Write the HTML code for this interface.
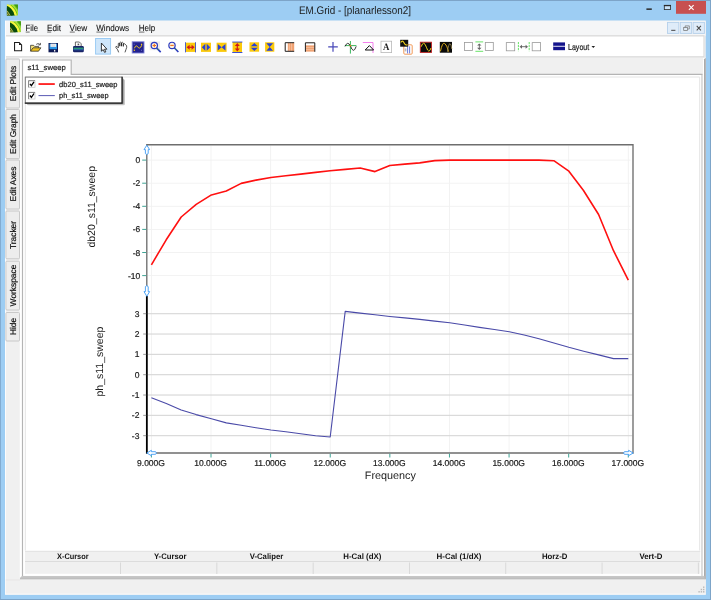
<!DOCTYPE html>
<html><head><meta charset="utf-8"><title>EM.Grid - [planarlesson2]</title>
<style>
html,body{margin:0;padding:0;width:711px;height:600px;overflow:hidden;background:#9dcdf3}
svg{display:block;position:absolute;left:0;top:0;will-change:transform}
text{font-family:"Liberation Sans",sans-serif;fill:#1a1a1a;text-rendering:geometricPrecision;stroke:#1a1a1a;stroke-width:0.2px}
.ns{stroke:none}
.m{font-size:9px;fill:#111;stroke-width:0.1px}
.t8{font-size:8.5px;fill:#1c1c1c}
.side{font-size:8.4px;fill:#0c0c0c;stroke:#0c0c0c;stroke-width:0.18px}
.hd{font-size:8px;font-weight:bold;fill:#111;stroke:none}
</style></head>
<body>
<svg width="711" height="600" viewBox="0 0 711 600">
<g id="frame">
<rect x="0" y="0" width="711" height="600" fill="#9dcdf3"/>
<path d="M0 0 H711 V600 H0 Z M0.8 0.9 V599 H710 V0.9 Z" fill="#7da4c8" fill-rule="evenodd"/>
</g>
<g id="title">
<g transform="translate(6.9 4.6)">
<clipPath id="lc1"><rect width="11" height="11"/></clipPath>
<g clip-path="url(#lc1)">
<rect width="11" height="11" fill="#6fc01c"/>
<circle cx="-4.95" cy="13.20" r="19.58" fill="none" stroke="#3f9a14" stroke-width="3.30"/>
<circle cx="-4.95" cy="13.20" r="16.50" fill="none" stroke="#b6ea3c" stroke-width="1.10"/>
<circle cx="-4.95" cy="13.20" r="13.97" fill="none" stroke="#f7f43e" stroke-width="2.20"/>
<circle cx="-4.95" cy="13.20" r="11.00" fill="#0a4a0c" stroke="#0a4a0c" stroke-width="3.74"/>
<circle cx="-4.95" cy="13.20" r="8.80" fill="#4c6a14"/>
<path d="M0 6.05 L3.30 11 M0 8.80 L1.32 11" stroke="#c8c86a" stroke-width="0.77"/>
</g></g>
<text class="ns" x="355" y="14.3" text-anchor="middle" font-size="11.1" textLength="112" lengthAdjust="spacingAndGlyphs" fill="#222">EM.Grid - [planarlesson2]</text>
<rect x="676" y="1" width="30" height="12.8" fill="#c75050"/>
<path d="M688.9 5.2 L693.6 9.9 M693.6 5.2 L688.9 9.9" stroke="#fff" stroke-width="1.15" fill="none"/>
<rect x="664.3" y="5.4" width="6.3" height="4.2" fill="#c9e2f7" stroke="#2a2a2a" stroke-width="0.8"/>
<rect x="663.9" y="4.9" width="7.1" height="1.3" fill="#2a2a2a"/>
<rect x="646.4" y="8.4" width="5.4" height="1.5" fill="#2a2a2a"/>
</g>
<g id="menubar">
<rect x="5" y="20.7" width="700.7" height="573.8" fill="#f0f0f0"/>
<rect x="5.5" y="20.7" width="700.2" height="15" fill="#f5f6f7"/>
<g transform="translate(10 21.3)">
<clipPath id="lc2"><rect width="10.9" height="10.9"/></clipPath>
<g clip-path="url(#lc2)">
<rect width="10.9" height="10.9" fill="#6fc01c"/>
<circle cx="-4.91" cy="13.08" r="19.40" fill="none" stroke="#3f9a14" stroke-width="3.27"/>
<circle cx="-4.91" cy="13.08" r="16.35" fill="none" stroke="#b6ea3c" stroke-width="1.09"/>
<circle cx="-4.91" cy="13.08" r="13.84" fill="none" stroke="#f7f43e" stroke-width="2.18"/>
<circle cx="-4.91" cy="13.08" r="10.90" fill="#0a4a0c" stroke="#0a4a0c" stroke-width="3.71"/>
<circle cx="-4.91" cy="13.08" r="8.72" fill="#4c6a14"/>
<path d="M0 6.00 L3.27 10.9 M0 8.72 L1.31 10.9" stroke="#c8c86a" stroke-width="0.76"/>
</g></g>
<text class="m" x="25.5" y="30.7" textLength="12.5" lengthAdjust="spacingAndGlyphs">File</text>
<rect x="25.7" y="31.7" width="4" height="0.7" fill="#333"/>
<text class="m" x="47" y="30.7" textLength="14" lengthAdjust="spacingAndGlyphs">Edit</text>
<rect x="47.2" y="31.7" width="4" height="0.7" fill="#333"/>
<text class="m" x="69.6" y="30.7" textLength="17.7" lengthAdjust="spacingAndGlyphs">View</text>
<rect x="69.8" y="31.7" width="5" height="0.7" fill="#333"/>
<text class="m" x="96.2" y="30.7" textLength="33" lengthAdjust="spacingAndGlyphs">Windows</text>
<rect x="96.4" y="31.7" width="7.5" height="0.7" fill="#333"/>
<text class="m" x="138.7" y="30.7" textLength="16.5" lengthAdjust="spacingAndGlyphs">Help</text>
<rect x="138.89999999999998" y="31.7" width="5.5" height="0.7" fill="#333"/>
<rect x="667.5" y="22.4" width="11.3" height="11" fill="#dfecf9" stroke="#b6d0ea" stroke-width="0.9"/>
<rect x="680.3" y="22.4" width="11.3" height="11" fill="#dfecf9" stroke="#b6d0ea" stroke-width="0.9"/>
<rect x="693.1" y="22.4" width="11.3" height="11" fill="#dfecf9" stroke="#b6d0ea" stroke-width="0.9"/>
<rect x="671.2" y="29.8" width="4.2" height="1.1" fill="#555"/>
<rect x="683.7" y="27.6" width="3.8" height="3" fill="none" stroke="#777" stroke-width="0.75"/><path d="M685.2 27.4 V25.9 H689.3 V29 H687.8" fill="none" stroke="#777" stroke-width="0.75"/>
<path d="M696.7 25.9 L700.9 30.3 M700.9 25.9 L696.7 30.3" stroke="#4a4a4a" stroke-width="1.05" fill="none"/>
</g>
<g id="toolbar">
<rect x="5.5" y="35.2" width="699" height="22.5" fill="#dadada"/>
<rect x="6" y="36.5" width="697.4" height="19.7" fill="#ffffff"/>
</g>
<g id="client">
<rect x="5.5" y="57.6" width="700.2" height="537" fill="#f0f0f0"/>
<rect x="5" y="20.7" width="0.8" height="573.8" fill="#ffffff"/>
<rect x="703" y="58" width="1.2" height="518" fill="#ffffff"/>
<path d="M704.1 59.4 L705.7 57.8 V579.5 H704.1 Z" fill="#a2a2a2"/>
<rect x="20" y="575.9" width="684.6" height="3.6" fill="#c6c6c6"/>
<rect x="20" y="577.6" width="684.6" height="1.9" fill="#bebebe"/>
<rect x="5.8" y="579.5" width="699.9" height="14.3" fill="#f0f0f0"/>
<rect x="5.8" y="579.6" width="14.2" height="0.7" fill="#e4e2e2"/>
<rect x="5.5" y="593.6" width="700.2" height="0.9" fill="#fbfbfb"/>
<path d="M19.8 58 H21.9 V576 L19.8 578 Z" fill="#ffffff"/>
<rect x="22.5" y="74" width="679.5" height="501.9" fill="#ffffff"/>
<rect x="22.5" y="59.5" width="48.8" height="16" fill="#ffffff"/>
<path d="M701.9 74 V575.9" fill="none" stroke="#cdcdcd" stroke-width="1.2"/>
<path d="M22.5 575.9 V60 H71.2 V74.4 H702.4" fill="none" stroke="#b4b4b4" stroke-width="1.15"/>
<text x="27.5" y="69.6" font-size="7.6" textLength="38.3" lengthAdjust="spacingAndGlyphs" fill="#111">s11_sweep</text>
<path d="M25.3 550.5 V77 H699.7 V550.5" fill="none" stroke="#e4e4e4" stroke-width="1"/>
</g>
<g id="sidetabs">
<rect x="5.9" y="59" width="13.6" height="49.0" rx="1" fill="#ededed" stroke="#c4c4c4" stroke-width="0.9"/>
<text class="side" transform="translate(16.3 83.5) rotate(-90)" text-anchor="middle">Edit Plots</text>
<rect x="5.9" y="109.5" width="13.6" height="49.1" rx="1" fill="#ededed" stroke="#c4c4c4" stroke-width="0.9"/>
<text class="side" transform="translate(16.3 134) rotate(-90)" text-anchor="middle">Edit Graph</text>
<rect x="5.9" y="160" width="13.6" height="49.0" rx="1" fill="#ededed" stroke="#c4c4c4" stroke-width="0.9"/>
<text class="side" transform="translate(16.3 184) rotate(-90)" text-anchor="middle">Edit Axes</text>
<rect x="5.9" y="211" width="13.6" height="47.8" rx="1" fill="#ededed" stroke="#c4c4c4" stroke-width="0.9"/>
<text class="side" transform="translate(16.3 235) rotate(-90)" text-anchor="middle">Tracker</text>
<rect x="5.9" y="261.2" width="13.6" height="48.8" rx="1" fill="#ededed" stroke="#c4c4c4" stroke-width="0.9"/>
<text class="side" transform="translate(16.3 285.5) rotate(-90)" text-anchor="middle">Workspace</text>
<rect x="5.9" y="312.5" width="13.6" height="28.5" rx="1" fill="#ededed" stroke="#c4c4c4" stroke-width="0.9"/>
<text class="side" transform="translate(16.3 326.5) rotate(-90)" text-anchor="middle">Hide</text>
</g>
<g id="table">
<rect x="25" y="551" width="675.2" height="22.8" fill="#f0f0f0"/>
<rect x="25" y="550.8" width="675.2" height="0.9" fill="#dedede"/>
<rect x="25" y="561" width="675.2" height="0.9" fill="#dadada"/>
<rect x="120.1" y="562.5" width="0.9" height="11.5" fill="#d6d6d6"/>
<rect x="216.4" y="562.5" width="0.9" height="11.5" fill="#d6d6d6"/>
<rect x="312.7" y="562.5" width="0.9" height="11.5" fill="#d6d6d6"/>
<rect x="409.0" y="562.5" width="0.9" height="11.5" fill="#d6d6d6"/>
<rect x="505.3" y="562.5" width="0.9" height="11.5" fill="#d6d6d6"/>
<rect x="601.6" y="562.5" width="0.9" height="11.5" fill="#d6d6d6"/>
<rect x="697.9" y="562.5" width="0.9" height="11.5" fill="#d6d6d6"/>
<text class="hd" x="57.0" y="559.4" textLength="31.6" lengthAdjust="spacingAndGlyphs">X-Cursor</text>
<text class="hd" x="153.9" y="559.4" textLength="32.5" lengthAdjust="spacingAndGlyphs">Y-Cursor</text>
<text class="hd" x="249.7" y="559.4" textLength="33.6" lengthAdjust="spacingAndGlyphs">V-Caliper</text>
<text class="hd" x="343.3" y="559.4" textLength="38" lengthAdjust="spacingAndGlyphs">H-Cal (dX)</text>
<text class="hd" x="436.6" y="559.4" textLength="44.9" lengthAdjust="spacingAndGlyphs">H-Cal (1/dX)</text>
<text class="hd" x="541.9" y="559.4" textLength="25.5" lengthAdjust="spacingAndGlyphs">Horz-D</text>
<text class="hd" x="639.4" y="559.4" textLength="23" lengthAdjust="spacingAndGlyphs">Vert-D</text>
<g fill="#b8b8b8"><rect x="703" y="586.5" width="1.4" height="1.4"/><rect x="703" y="588.8" width="1.4" height="1.4"/><rect x="703" y="591.1" width="1.4" height="1.4"/><rect x="700.7" y="588.8" width="1.4" height="1.4"/><rect x="700.7" y="591.1" width="1.4" height="1.4"/><rect x="698.4" y="591.1" width="1.4" height="1.4"/></g>
</g>
<g id="plot">
<rect x="150.95" y="145.5" width="0.9" height="307" fill="#f1f1f1"/>
<rect x="210.56" y="145.5" width="0.9" height="307" fill="#f1f1f1"/>
<rect x="270.17" y="145.5" width="0.9" height="307" fill="#f1f1f1"/>
<rect x="329.78" y="145.5" width="0.9" height="307" fill="#f1f1f1"/>
<rect x="389.39" y="145.5" width="0.9" height="307" fill="#f1f1f1"/>
<rect x="449.00" y="145.5" width="0.9" height="307" fill="#f1f1f1"/>
<rect x="508.61" y="145.5" width="0.9" height="307" fill="#f1f1f1"/>
<rect x="568.22" y="145.5" width="0.9" height="307" fill="#f1f1f1"/>
<rect x="627.83" y="145.5" width="0.9" height="307" fill="#f1f1f1"/>
<rect x="147.5" y="159.65" width="483" height="0.9" fill="#f1f1f1"/>
<rect x="147.5" y="182.75" width="483" height="0.9" fill="#f1f1f1"/>
<rect x="147.5" y="205.85" width="483" height="0.9" fill="#f1f1f1"/>
<rect x="147.5" y="228.95" width="483" height="0.9" fill="#f1f1f1"/>
<rect x="147.5" y="252.05" width="483" height="0.9" fill="#f1f1f1"/>
<rect x="147.5" y="275.15" width="483" height="0.9" fill="#f1f1f1"/>
<rect x="147.8" y="313.15" width="484.6" height="1.1" fill="#d6d6d6"/>
<rect x="147.8" y="333.48" width="484.6" height="1.1" fill="#d6d6d6"/>
<rect x="147.8" y="353.81" width="484.6" height="1.1" fill="#d6d6d6"/>
<rect x="147.8" y="374.14" width="484.6" height="1.1" fill="#d6d6d6"/>
<rect x="147.8" y="394.47" width="484.6" height="1.1" fill="#d6d6d6"/>
<rect x="147.8" y="414.80" width="484.6" height="1.1" fill="#d6d6d6"/>
<rect x="147.8" y="435.13" width="484.6" height="1.1" fill="#d6d6d6"/>
<path d="M146.8 291 V144.7 H633 V453 H152" fill="none" stroke="#6e6e6e" stroke-width="1.35"/>
<rect x="145.95" y="296" width="1.8" height="157.7" fill="#000"/>
<rect x="142.2" y="159.60" width="4" height="1" fill="#3fa596"/>
<rect x="142.2" y="182.70" width="4" height="1" fill="#3fa596"/>
<rect x="142.2" y="205.80" width="4" height="1" fill="#3fa596"/>
<rect x="142.2" y="228.90" width="4" height="1" fill="#3fa596"/>
<rect x="142.2" y="252.00" width="4" height="1" fill="#3fa596"/>
<rect x="142.2" y="275.10" width="4" height="1" fill="#3fa596"/>
<rect x="143.2" y="313.20" width="3" height="1" fill="#9a9a9a"/>
<rect x="143.2" y="333.53" width="3" height="1" fill="#9a9a9a"/>
<rect x="143.2" y="353.86" width="3" height="1" fill="#9a9a9a"/>
<rect x="143.2" y="374.19" width="3" height="1" fill="#9a9a9a"/>
<rect x="143.2" y="394.52" width="3" height="1" fill="#9a9a9a"/>
<rect x="143.2" y="414.85" width="3" height="1" fill="#9a9a9a"/>
<rect x="143.2" y="435.18" width="3" height="1" fill="#9a9a9a"/>
<rect x="150.90" y="453.7" width="1" height="3.8" fill="#3fa596"/>
<rect x="210.51" y="453.7" width="1" height="3.8" fill="#3fa596"/>
<rect x="270.12" y="453.7" width="1" height="3.8" fill="#3fa596"/>
<rect x="329.73" y="453.7" width="1" height="3.8" fill="#3fa596"/>
<rect x="389.34" y="453.7" width="1" height="3.8" fill="#3fa596"/>
<rect x="448.95" y="453.7" width="1" height="3.8" fill="#3fa596"/>
<rect x="508.56" y="453.7" width="1" height="3.8" fill="#3fa596"/>
<rect x="568.17" y="453.7" width="1" height="3.8" fill="#3fa596"/>
<rect x="627.78" y="453.7" width="1" height="3.8" fill="#3fa596"/>
<text class="t8" x="140.2" y="163.1" text-anchor="end">0</text>
<text class="t8" x="140.2" y="186.2" text-anchor="end">-2</text>
<text class="t8" x="140.2" y="209.3" text-anchor="end">-4</text>
<text class="t8" x="140.2" y="232.4" text-anchor="end">-6</text>
<text class="t8" x="140.2" y="255.5" text-anchor="end">-8</text>
<text class="t8" x="140.2" y="278.6" text-anchor="end">-10</text>
<text class="t8" x="139.4" y="316.7" text-anchor="end">3</text>
<text class="t8" x="139.4" y="337.0" text-anchor="end">2</text>
<text class="t8" x="139.4" y="357.4" text-anchor="end">1</text>
<text class="t8" x="139.4" y="377.7" text-anchor="end">0</text>
<text class="t8" x="139.4" y="398.0" text-anchor="end">-1</text>
<text class="t8" x="139.4" y="418.3" text-anchor="end">-2</text>
<text class="t8" x="139.4" y="438.7" text-anchor="end">-3</text>
<text class="t8" x="151.0" y="466.4" text-anchor="middle">9.000G</text>
<text class="t8" x="210.6" y="466.4" text-anchor="middle">10.000G</text>
<text class="t8" x="270.2" y="466.4" text-anchor="middle">11.000G</text>
<text class="t8" x="329.8" y="466.4" text-anchor="middle">12.000G</text>
<text class="t8" x="389.4" y="466.4" text-anchor="middle">13.000G</text>
<text class="t8" x="449.1" y="466.4" text-anchor="middle">14.000G</text>
<text class="t8" x="508.7" y="466.4" text-anchor="middle">15.000G</text>
<text class="t8" x="568.3" y="466.4" text-anchor="middle">16.000G</text>
<text class="t8" x="627.9" y="466.4" text-anchor="middle">17.000G</text>
<text class="ns" x="390.3" y="479.2" font-size="10.8" text-anchor="middle" fill="#222">Frequency</text>
<text class="ns" transform="translate(95.2 206.8) rotate(-90)" font-size="10.5" text-anchor="middle" fill="#222">db20_s11_sweep</text>
<text class="ns" transform="translate(103.3 361.6) rotate(-90)" font-size="10.5" text-anchor="middle" fill="#222">ph_s11_sweep</text>
<polyline points="151.4,264.8 166.2,239.8 181.2,217.0 196.2,204.4 211.4,194.9 226.3,191.0 241.2,183.4 256.0,180.1 270.9,177.5 285.8,175.8 300.7,174.1 315.6,172.4 330.1,170.8 345.3,169.4 360.2,168.0 375.0,171.6 389.8,165.5 404.8,164.1 419.7,162.9 434.8,160.6 449.7,160.1 538.9,160.1 553.8,160.7 568.5,170.8 583.5,190.5 598.6,214.5 613.5,250.7 628.3,280.1" fill="none" stroke="#ff1010" stroke-width="1.6" stroke-linejoin="round"/>
<polyline points="151.4,397.8 166.3,403.4 181.2,409.9 196.1,414.6 211.4,418.7 226.3,422.9 241.2,425.3 256.0,427.8 270.9,430.0 285.8,431.8 300.7,433.8 315.6,435.8 330.2,437.0 345.2,311.4 360.2,313.1 375.0,314.8 389.8,316.5 404.8,317.9 419.8,319.4 434.8,321.1 449.7,322.8 464.6,325.0 479.5,327.4 494.4,329.5 509.3,331.7 524.2,335.0 539.0,338.8 553.9,343.0 568.8,347.3 583.7,351.2 598.6,354.9 613.5,358.6 628.3,358.6" fill="none" stroke="#4a4aa8" stroke-width="1.1" stroke-linejoin="round"/>
<path d="M146.8 145.2 L149.6 149.6 H148.2 V153.6 Q146.8 155.4 145.4 153.6 V149.6 H144 Z" stroke="#3d9bf5" stroke-width="0.9" fill="#ffffff" stroke-linejoin="round"/>
<path d="M146.8 296.3 L149.6 291.6 H148.2 V286.6 Q146.8 284.8 145.4 286.6 V291.6 H144 Z" stroke="#3d9bf5" stroke-width="0.9" fill="#ffffff" stroke-linejoin="round"/>
<path d="M146.8 453 L151.4 450.3 V451.7 H155.6 Q157.3 453 155.6 454.3 H151.4 V455.7 Z" stroke="#3d9bf5" stroke-width="0.9" fill="#ffffff" stroke-linejoin="round"/>
<path d="M633.2 453 L628.6 450.3 V451.7 H624.4 Q622.7 453 624.4 454.3 H628.6 V455.7 Z" stroke="#3d9bf5" stroke-width="0.9" fill="#ffffff" stroke-linejoin="round"/>
</g>
<g id="legend">
<rect x="27" y="79.3" width="98" height="26" fill="#9a9a9a" opacity="0.55" rx="1.5"/>
<rect x="26" y="78.3" width="98" height="26" fill="#777" opacity="0.45" rx="1.5"/>
<rect x="25.3" y="77.1" width="96.8" height="26" fill="#ffffff" stroke="#7a7a7a" stroke-width="1"/><path d="M24.8 103.1 H122.1 V76.8" fill="none" stroke="#1e1e1e" stroke-width="1.2"/>
<rect x="28.6" y="80.7" width="6.4" height="6.6" fill="#fff" stroke="#c8c8c8" stroke-width="0.8"/><path d="M28.6 87.3 V80.7 H35" fill="none" stroke="#7c7c7c" stroke-width="0.9"/>
<path d="M29.9 83.8 L31.4 85.7 L34 81.8" fill="none" stroke="#000" stroke-width="1.3"/>
<rect x="28.6" y="92.4" width="6.4" height="6.6" fill="#fff" stroke="#c8c8c8" stroke-width="0.8"/><path d="M28.6 99.0 V92.4 H35" fill="none" stroke="#7c7c7c" stroke-width="0.9"/>
<path d="M29.9 95.5 L31.4 97.4 L34 93.5" fill="none" stroke="#000" stroke-width="1.3"/>
<rect x="38.5" y="83.2" width="16.3" height="1.7" fill="#ff1010"/>
<rect x="38.5" y="95.1" width="16.3" height="1" fill="#5a5ab4"/>
<text x="59.1" y="86.7" font-size="7.5" textLength="58.4" lengthAdjust="spacingAndGlyphs">db20_s11_sweep</text>
<text x="59.1" y="97.9" font-size="7.5" textLength="49.5" lengthAdjust="spacingAndGlyphs">ph_s11_sweep</text>
</g>
<g id="icons">
<path d="M14.55 42.5 H19.2 L21.6 44.9 V50.7 H14.55 Z" fill="#fff" stroke="#1c1c1c" stroke-width="1.05" stroke-linejoin="miter"/><path d="M19 42.5 L21.6 45.1 H19 Z" fill="#1c1c1c"/>
<path d="M30.6 51.1 V45.3 H33.6 L34.6 46.4 H38.5 V48" fill="#f7e47e" stroke="#2a2a2a" stroke-width="0.75" stroke-linejoin="round"/><path d="M30.6 51.2 L33 47.8 H40.9 L38.5 51.2 Z" fill="#f1c21e" stroke="#2a2a2a" stroke-width="0.75" stroke-linejoin="round"/><path d="M36.2 44.4 Q38 42.8 39.8 44.3 M40.4 42.9 V44.9 H38.4" fill="none" stroke="#333" stroke-width="0.8"/>
<rect x="48.5" y="43" width="9.5" height="9.3" fill="#101a54"/><rect x="49.5" y="43.8" width="7.5" height="5.4" fill="#2a96e6"/><rect x="50.5" y="43.7" width="5.6" height="3.2" fill="#f6f8fb"/><rect x="51.2" y="44.7" width="4.2" height="0.5" fill="#b0b8c4"/><rect x="51.2" y="45.8" width="4.2" height="0.5" fill="#b0b8c4"/><rect x="54" y="49.9" width="1.3" height="1.7" fill="#f0f0f0"/>
<path d="M75.4 46.4 V42 H79.4 L81.2 43.8 V46.4 Z" fill="#fff" stroke="#444" stroke-width="0.8"/><rect x="73" y="46" width="10.8" height="6.2" rx="1.2" fill="#1a2468"/><rect x="73.5" y="47.6" width="9.8" height="1.8" fill="#2a9a78"/><rect x="73.5" y="49.4" width="9.8" height="0.8" fill="#2d6fc0"/><rect x="77.6" y="43.6" width="1.6" height="1.6" fill="#555"/>
<rect x="95.6" y="38.5" width="15" height="15.6" fill="#cfe6fa" stroke="#93c7f3" stroke-width="0.9"/>
<path d="M101.4 43 V51.2 L103.2 49.6 L104.6 52.4 L105.8 51.8 L104.5 49.2 H106.9 Z" fill="#fff" stroke="#222" stroke-width="0.9" stroke-linejoin="round"/>
<path d="M118.5 52 L117.7 49.8 L115.9 47.5 Q115.5 46.2 116.8 46.4 L118.3 47.9 V43.5 Q119 42.3 119.8 43.5 V46.2 V42.8 Q120.7 41.4 121.5 42.8 V46.2 V43 Q122.4 41.6 123.3 43 V46.4 V44 Q124.2 43 125 44.2 L126.6 45.6 Q127.1 47.4 126 49.4 L125.1 52" fill="#fff" stroke="#1c1c1c" stroke-width="0.75" stroke-linejoin="round" stroke-linecap="round"/>
<rect x="132.2" y="41.8" width="11.8" height="11.2" fill="#22228e" stroke="#7c80d8" stroke-width="0.9"/><path d="M134.4 48.3 Q136 44.2 137.7 46.8 Q139.6 50 141.8 45.2" fill="none" stroke="#f2d21e" stroke-width="0.95"/><rect x="133.7" y="49.6" width="1.3" height="1.3" fill="#f0c828"/><rect x="140.9" y="43.7" width="1.3" height="1.3" fill="#f0c828"/><rect x="133.7" y="43.7" width="1" height="1" fill="#6a6ac0"/><rect x="141" y="49.8" width="1" height="1" fill="#6a6ac0"/>
<rect x="149.6" y="41.4" width="10.4" height="8.8" fill="#ececec"/>
<path d="M156.5 47.9 L160.70000000000002 52.1" stroke="#2b3ac0" stroke-width="1.6"/><path d="M156.9 48.3 L158.9 50.3" stroke="#3d9a5a" stroke-width="0.9"/><circle cx="154.3" cy="45.5" r="3.15" fill="#fdf2dc" stroke="#2b3ac0" stroke-width="1.2"/><path d="M152.60000000000002 45.5 H156.0 M154.3 43.8 V47.2" stroke="#f0701a" stroke-width="1.1"/>
<path d="M174.2 47.8 L178.4 52.0" stroke="#2b3ac0" stroke-width="1.6"/><path d="M174.6 48.199999999999996 L176.6 50.199999999999996" stroke="#3d9a5a" stroke-width="0.9"/><circle cx="172" cy="45.4" r="3.15" fill="#fdf2dc" stroke="#2b3ac0" stroke-width="1.2"/><path d="M170.3 45.4 H173.7" stroke="#f0701a" stroke-width="1.1"/>
<rect x="185.4" y="42.7" width="10.4" height="9.2" fill="#fbc90a"/><rect x="185.2" y="42.2" width="0.8" height="10.2" fill="#2740d8"/><rect x="195.2" y="42.2" width="0.8" height="10.2" fill="#2740d8"/><path d="M186.6 47.3 L189.6 44.8 V49.8 Z M194.6 47.3 L191.6 44.8 V49.8 Z" fill="#d01818"/><rect x="188.6" y="46.7" width="4" height="1.2" fill="#d01818"/>
<rect x="201" y="42.7" width="10" height="9.2" fill="#fbc90a"/><path d="M201.8 47.3 L205.3 43.8 V50.8 Z M210.2 47.3 L206.7 43.8 V50.8 Z" fill="#2740d8"/>
<rect x="216.6" y="42.7" width="10" height="9.2" fill="#fbc90a"/><path d="M217.8 44 L221.6 47.3 L217.8 50.6 Z M225.4 44 L221.6 47.3 L225.4 50.6 Z" fill="#2740d8"/>
<rect x="232.6" y="42" width="9.4" height="10.4" fill="#fbc90a"/><rect x="232.2" y="41.6" width="10.2" height="0.9" fill="#2740d8"/><rect x="232.2" y="52" width="10.2" height="0.9" fill="#2740d8"/><path d="M237.3 43 L234.8 46 H239.8 Z M237.3 51.6 L234.8 48.6 H239.8 Z" fill="#d01818"/><rect x="236.7" y="45.4" width="1.2" height="3.8" fill="#d01818"/>
<rect x="249.5" y="42.3" width="9.6" height="9.4" fill="#fbc90a"/><path d="M254.3 43 L250.8 46.3 H257.8 Z M254.3 51 L250.8 47.7 H257.8 Z" fill="#2740d8"/>
<rect x="265.1" y="42.3" width="9.2" height="9.4" fill="#fbc90a"/><path d="M266.3 43.3 H273.1 L269.7 47 Z M266.3 50.7 H273.1 L269.7 47 Z" fill="#2740d8"/>
<rect x="285.2" y="42.8" width="9" height="8.4" fill="#f0a070"/><rect x="285.2" y="42.8" width="2.6" height="8.4" fill="#fff"/><path d="M289.3 43 V51 M291.6 43 V51" stroke="#fbd2b8" stroke-width="0.6"/><path d="M294.2 42.7 H285.2 V51.3 H294.2" fill="none" stroke="#222" stroke-width="1"/>
<rect x="305.4" y="42.8" width="9.4" height="8.8" fill="#f0a070"/><rect x="305.4" y="42.8" width="9.4" height="2.6" fill="#fff"/><path d="M305.6 47.6 H314.6 M305.6 49.6 H314.6" stroke="#fbd2b8" stroke-width="0.6"/><path d="M305.4 51.8 V42.8 H314.8 V51.8" fill="none" stroke="#222" stroke-width="1"/>
<path d="M328.2 46.9 H337.8 M333 41.9 V51.7" stroke="#4848b8" stroke-width="1.2"/>
<path d="M350.4 41 V53.6 M344.8 45.6 H356.4" stroke="#22b04a" stroke-width="0.9"/><path d="M345 46.4 Q347.6 40.6 350.4 45.8 Q353.4 54.6 356.2 46.4" fill="none" stroke="#222" stroke-width="0.9"/><rect x="349.6" y="44.9" width="1.6" height="1.5" fill="#f08020"/>
<path d="M362.8 42.5 H373 V53" fill="none" stroke="#f060e8" stroke-width="0.8"/><path d="M365.2 50 L369.4 45.6 L373.6 50 Z" fill="none" stroke="#111" stroke-width="1"/>
<rect x="381" y="41.2" width="10.6" height="11.4" fill="#fff" stroke="#b8b8b8" stroke-width="0.8"/><text class="ns" x="386.3" y="50.3" text-anchor="middle" font-size="10" font-weight="bold" textLength="6.4" lengthAdjust="spacingAndGlyphs" style="font-family:'Liberation Serif',serif" fill="#111">A</text>
<rect x="403.8" y="44.8" width="8.4" height="9.4" rx="1" fill="#fff" stroke="#f09048" stroke-width="0.9"/><path d="M407.6 46.4 V53.4 M409.6 46.4 V53.4" stroke="#5a6ad8" stroke-width="0.9"/><rect x="404.6" y="48.4" width="1.8" height="3" fill="#bbb"/><rect x="400.2" y="39.8" width="8" height="6.9" fill="#111"/><path d="M400.8 42.6 Q402.4 39.6 404 42.8 T407.6 44.6" fill="none" stroke="#f2d21e" stroke-width="1.1"/>
<rect x="420.3" y="42.2" width="11.2" height="10.2" fill="#0a0a0a" stroke="#c02424" stroke-width="0.9"/><path d="M421.2 46.7 Q423.6 39.4 426.4 47.2 Q428.8 54.6 431 48" fill="none" stroke="#e8cc1c" stroke-width="1"/>
<rect x="439.8" y="41.9" width="12.2" height="10.8" fill="#0a0a0a"/><path d="M440.4 51.4 Q442.4 42 444.6 43.4 Q446.8 44.6 448.6 51.6" fill="none" stroke="#d8a818" stroke-width="1"/><path d="M447.4 51.8 Q448.6 43.6 450 43.6 Q451.2 43.8 451.8 49" fill="none" stroke="#9a8a50" stroke-width="0.85"/>
<rect x="464.5" y="42.5" width="8" height="8" fill="#fff" stroke="#999" stroke-width="0.8"/>
<rect x="485.3" y="42.5" width="8" height="8" fill="#fff" stroke="#999" stroke-width="0.8"/>
<path d="M475.4 41.9 H483.2 M475.4 51.3 H483.2" stroke="#58e058" stroke-width="0.9"/><path d="M479.3 43.4 L477.1 45.6 H481.5 Z M479.3 50 L477.1 47.8 H481.5 Z" fill="#666"/><rect x="478.85" y="44.6" width="0.9" height="4.4" fill="#666"/>
<rect x="506.3" y="42.6" width="8.4" height="8.2" fill="#fff" stroke="#999" stroke-width="0.8"/>
<rect x="532.2" y="42.6" width="8.4" height="8.2" fill="#fff" stroke="#999" stroke-width="0.8"/>
<path d="M518.4 42 V51.2 M529.2 42 V51.2" stroke="#58e058" stroke-width="0.9" stroke-dasharray="2.2 0.8"/><path d="M519.6 46.7 L522 44.7 V48.7 Z M528 46.7 L525.6 44.7 V48.7 Z" fill="#666"/><rect x="521.4" y="46.25" width="4.8" height="0.9" fill="#666"/>
<rect x="553.2" y="42.4" width="11.8" height="7.8" fill="#14148c"/><rect x="553.2" y="45.8" width="11.8" height="0.9" fill="#fff"/>
<text x="568" y="49.5" font-size="8.6" textLength="21.2" lengthAdjust="spacingAndGlyphs" fill="#000">Layout</text><path d="M591.5 46 H595.1 L593.3 48 Z" fill="#222"/>
</g>
</svg>
</body></html>
